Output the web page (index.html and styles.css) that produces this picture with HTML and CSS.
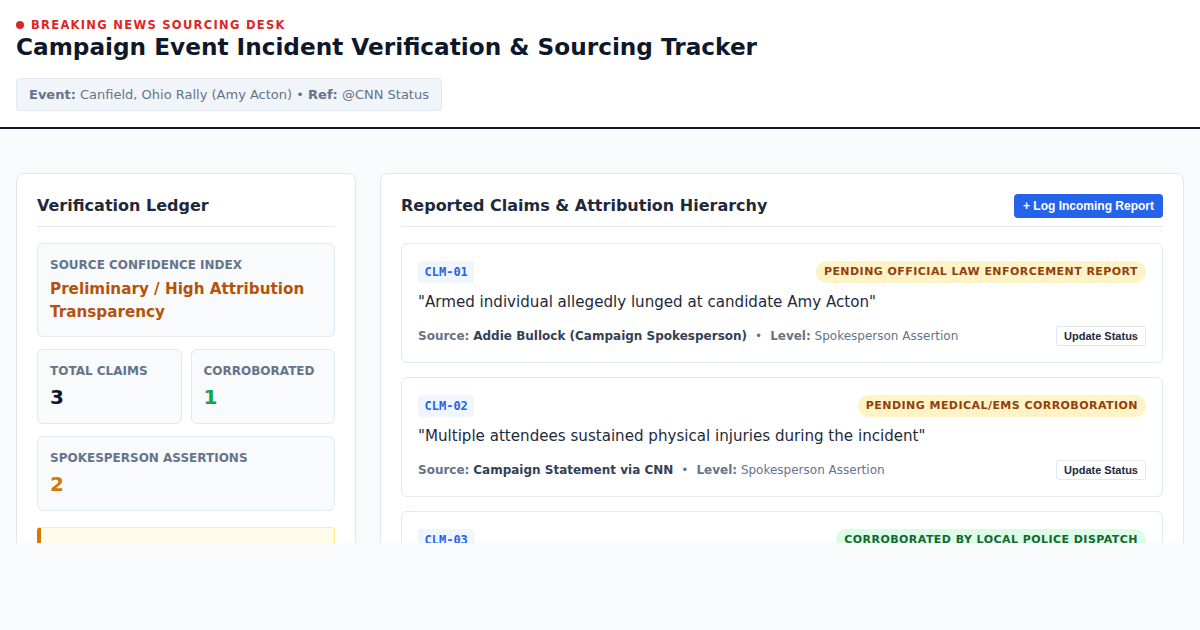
FILE: index.html
```html
<!DOCTYPE html>
<html>
<head>
<meta charset="utf-8">
<link rel="stylesheet" href="styles.css">
</head>
<body>
<header class="top">
  <div class="kicker"><span class="dot"></span>BREAKING NEWS SOURCING DESK</div>
  <h1 class="title">Campaign Event Incident Verification &amp; Sourcing Tracker</h1>
  <div class="meta"><b>Event:</b> Canfield, Ohio Rally (Amy Acton) • <b>Ref:</b> @CNN Status</div>
</header>
<main class="main">
  <section class="card ledger">
    <h2 class="card-title">Verification Ledger</h2>
    <div class="box">
      <div class="label">Source Confidence Index</div>
      <div class="conf">Preliminary / High Attribution Transparency</div>
    </div>
    <div class="stats">
      <div class="box">
        <div class="label">Total Claims</div>
        <div class="num dark">3</div>
      </div>
      <div class="box">
        <div class="label">Corroborated</div>
        <div class="num green">1</div>
      </div>
    </div>
    <div class="box">
      <div class="label">Spokesperson Assertions</div>
      <div class="num orange">2</div>
    </div>
    <div class="alert">Editorial caution: attribute all unconfirmed claims to the campaign.</div>
  </section>
  <section class="card claims">
    <div class="claims-head">
      <h2 class="card-title">Reported Claims &amp; Attribution Hierarchy</h2>
      <button class="primary">+ Log Incoming Report</button>
    </div>
    <div class="claim">
      <div class="claim-top">
        <span class="tag">CLM-01</span>
        <span class="badge pending">Pending Official Law Enforcement Report</span>
      </div>
      <p class="quote">"Armed individual allegedly lunged at candidate Amy Acton"</p>
      <div class="claim-foot">
        <div class="src"><span class="k">Source:</span> <strong>Addie Bullock (Campaign Spokesperson)</strong><span class="sep">•</span><span class="k">Level:</span> Spokesperson Assertion</div>
        <button class="small">Update Status</button>
      </div>
    </div>
    <div class="claim">
      <div class="claim-top">
        <span class="tag">CLM-02</span>
        <span class="badge pending">Pending Medical/EMS Corroboration</span>
      </div>
      <p class="quote">"Multiple attendees sustained physical injuries during the incident"</p>
      <div class="claim-foot">
        <div class="src"><span class="k">Source:</span> <strong>Campaign Statement via CNN</strong><span class="sep">•</span><span class="k">Level:</span> Spokesperson Assertion</div>
        <button class="small">Update Status</button>
      </div>
    </div>
    <div class="claim">
      <div class="claim-top">
        <span class="tag">CLM-03</span>
        <span class="badge ok">Corroborated by Local Police Dispatch</span>
      </div>
      <p class="quote">"Police responded to a disturbance near the rally stage"</p>
      <div class="claim-foot">
        <div class="src"><span class="k">Source:</span> <strong>Mahoning County Dispatch</strong><span class="sep">•</span><span class="k">Level:</span> Official Record</div>
        <button class="small">Update Status</button>
      </div>
    </div>
  </section>
</main>
</body>
</html>
```
FILE: styles.css
```css
* { box-sizing: border-box; }
html, body { margin: 0; padding: 0; }
body {
  font-family: "DejaVu Sans", sans-serif;
  background: #f8fafc;
  color: #1e293b;
}
.top {
  background: #fff;
  padding: 18px 16px 16px;
  border-bottom: 2px solid #0f172a;
  height: 129px;
}
.kicker {
  display: flex;
  align-items: center;
  gap: 7px;
  color: #dc2626;
  font-size: 11.5px;
  font-weight: bold;
  letter-spacing: 1.3px;
  line-height: 14px;
}
.dot {
  width: 8px; height: 8px; border-radius: 50%;
  background: #dc2626;
  display: inline-block;
}
.title {
  margin: 0;
  font-size: 23.2px;
  line-height: 30px;
  font-weight: bold;
  color: #0f172a;
}
.meta {
  display: inline-block;
  margin-top: 16px;
  background: #f1f5f9;
  border: 1px solid #e2e8f0;
  border-radius: 4px;
  padding: 8px 12px 7px;
  font-size: 13px;
  line-height: 16px;
  color: #64748b;
}
.meta b { color: #64748b; }
.main {
  display: grid;
  grid-template-columns: 340px 1fr;
  gap: 24px;
  padding: 44px 16px 0;
  height: 414px;
  overflow: hidden;
  align-items: start;
}
.card {
  background: #fff;
  border: 1px solid #e2e8f0;
  border-radius: 8px;
  padding: 20px;
}
.card-title {
  margin: 0;
  font-size: 16px;
  line-height: 22px;
  font-weight: bold;
  color: #1e293b;
}
.ledger .card-title {
  padding-top: 1px;
  padding-bottom: 9px;
  border-bottom: 1px solid #e2e8f0;
  margin-bottom: 16px;
}
.box {
  background: #f8fafc;
  border: 1px solid #e2e8f0;
  border-radius: 6px;
  padding: 14px 12px 13px;
  margin-bottom: 12px;
}
.label {
  font-size: 12px;
  line-height: 15px;
  font-weight: bold;
  text-transform: uppercase;
  color: #64748b;
}
.conf {
  margin-top: 5px;
  font-size: 15.2px;
  line-height: 23px;
  font-weight: bold;
  color: #b45309;
}
.ledger > .box:first-of-type { padding-bottom: 12px; }
.stats {
  display: grid;
  grid-template-columns: 1fr 1fr;
  gap: 9px;
}
.num {
  margin-top: 5px;
  font-size: 20px;
  line-height: 26px;
  font-weight: bold;
}
.dark { color: #0f172a; }
.green { color: #16a34a; }
.orange { color: #d97706; }
.alert {
  margin-top: 16px;
  background: #fefce8;
  border: 1px solid #fef08a;
  border-left: 4px solid #d97706;
  border-radius: 4px;
  padding: 18px 12px;
  font-size: 13px;
  color: #854d0e;
  height: 80px;
}
.claims-head {
  display: flex;
  justify-content: space-between;
  align-items: center;
  padding-bottom: 8px;
  border-bottom: 1px solid #e2e8f0;
  margin-bottom: 16px;
}
button { font-family: "Liberation Sans", Arial, sans-serif; cursor: pointer; }
.primary {
  background: #2563eb;
  color: #fff;
  border: none;
  border-radius: 4px;
  font-size: 12px;
  font-weight: bold;
  padding: 0 9px;
  height: 24px;
}
.claim {
  border: 1px solid #e2e8f0;
  border-radius: 6px;
  padding: 17px 16px 16px;
  margin-bottom: 14px;
}
.claim-top {
  display: flex;
  justify-content: space-between;
  align-items: center;
}
.tag {
  font-family: "DejaVu Sans Mono", monospace;
  font-weight: bold;
  font-size: 12px;
  line-height: 14px;
  color: #2563eb;
  background: #eff6ff;
  border-radius: 3px;
  padding: 4px 6.5px;
}
.badge {
  font-size: 11px;
  line-height: 14px;
  font-weight: bold;
  letter-spacing: 0.45px;
  text-transform: uppercase;
  border-radius: 999px;
  padding: 4px 8px;
}
.pending { background: #fef3c7; color: #92400e; }
.ok { background: #dcfce7; color: #166534; }
.quote {
  margin: 7px 0 12px;
  font-size: 15.1px;
  line-height: 24px;
  color: #1e293b;
}
.claim-foot {
  display: flex;
  justify-content: space-between;
  align-items: center;
}
.src {
  font-size: 12px;
  color: #64748b;
}
.src .k { font-weight: bold; color: #64748b; }
.src strong { color: #334155; }
.sep { margin: 0 8px; }
.small {
  background: #fff;
  border: 1px solid #e2e8f0;
  border-radius: 3px;
  font-size: 11px;
  font-weight: bold;
  color: #1e293b;
  height: 20px;
  padding: 0 7px;
}
```
